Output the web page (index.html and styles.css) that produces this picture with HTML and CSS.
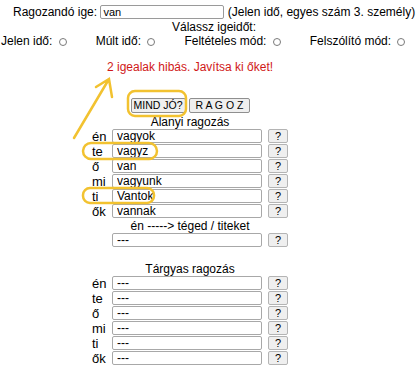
FILE: index.html
```html
<!DOCTYPE html>
<html lang="hu">
  <head>
    <meta charset="UTF-8" />
    <title>Igeragozás</title>
    <link rel="stylesheet" href="styles.css">
  </head>
  <body>
    <div class="page">
      <div class="verbLine">
        Ragozandó ige: <input type="text" class="verbInput" value="van" />
        (Jelen idő, egyes szám 3. személy)
      </div>
      <div class="choose">Válassz igeidőt:</div>
      <div class="tenses">
        <label>Jelen idő: <input type="radio" name="ido" /></label>
        <label>Múlt idő: <input type="radio" name="ido" /></label>
        <label>Feltételes mód: <input type="radio" name="ido" /></label>
        <label>Felszólító mód: <input type="radio" name="ido" /></label>
      </div>

      <div class="main">
        <div class="msg">2 igealak hibás. Javítsa ki őket!</div>
        <div class="buttons">
          <button class="bigBtn">MIND JÓ?</button><button class="bigBtn">R A G O Z</button>
        </div>

        <div class="title">Alanyi ragozás</div>
        <div class="conj">
          <span>én</span><input class="field" value="vagyok" /><button class="help">?</button>
          <span>te</span><input class="field" value="vagyz" /><button class="help">?</button>
          <span>ő</span><input class="field" value="van" /><button class="help">?</button>
          <span>mi</span><input class="field" value="vagyunk" /><button class="help">?</button>
          <span>ti</span><input class="field" value="Vantok" /><button class="help">?</button>
          <span>ők</span><input class="field" value="vannak" /><button class="help">?</button>
        </div>
        <div class="title">én -----&gt; téged / titeket</div>
        <div class="conj">
          <span></span><input class="field" value="---" /><button class="help">?</button>
        </div>

        <div class="title spaced">Tárgyas ragozás</div>
        <div class="conj">
          <span>én</span><input class="field" value="---" /><button class="help">?</button>
          <span>te</span><input class="field" value="---" /><button class="help">?</button>
          <span>ő</span><input class="field" value="---" /><button class="help">?</button>
          <span>mi</span><input class="field" value="---" /><button class="help">?</button>
          <span>ti</span><input class="field" value="---" /><button class="help">?</button>
          <span>ők</span><input class="field" value="---" /><button class="help">?</button>
        </div>
      </div>

      <!-- sárga jelölések a képernyőképen -->
      <svg class="marks" width="419" height="367" viewBox="0 0 419 367">
        <g fill="none" stroke="#f2c230" stroke-width="2.5" stroke-linecap="round">
          <rect x="128" y="91" width="58" height="25" rx="7" />
          <rect x="83" y="143" width="74" height="16" rx="8" />
          <rect x="83" y="188" width="71" height="15" rx="7" />
          <path d="M74 138 L109 79 M96 87 L109 79 L112 97" />
        </g>
      </svg>
    </div>
  </body>
</html>
```

FILE: styles.css
```css
* {
  font-family: "Liberation Sans", Arial, sans-serif;
}

body {
  margin: 0;
  font-size: 12px;
  color: #000;
  background: #fff;
}

.page {
  position: relative;
  width: 419px;
  height: 367px;
  overflow: hidden;
  padding-top: 5px;
  box-sizing: border-box;
}

.verbLine {
  height: 15px;
  line-height: 15px;
  padding-left: 13px;
  white-space: nowrap;
}

.verbInput {
  width: 124px;
  height: 14px;
  box-sizing: border-box;
  border: 1px solid #9a9a9a;
  border-radius: 2px;
  padding: 0 2px;
  font-size: 11px;
  vertical-align: top;
  margin: 0;
}

.choose {
  height: 14px;
  line-height: 14px;
  text-align: center;
  padding-left: 9px;
}

.tenses {
  display: flex;
  gap: 29px;
  padding-left: 1px;
  height: 15px;
  line-height: 15px;
  white-space: nowrap;
}

.tenses input {
  appearance: none;
  width: 8px;
  height: 8px;
  margin: 0 0 0 3px;
  border: 1px solid #7a7a7a;
  border-radius: 50%;
  background: #fff;
  vertical-align: -1px;
}

.main {
  width: 380px;
  text-align: center;
}

.msg {
  color: #d01818;
  margin-top: 11px;
  height: 14px;
  line-height: 14px;
}

.buttons {
  margin-top: 24px;
  margin-bottom: 3px;
  height: 14px;
  display: flex;
  justify-content: center;
  gap: 3px;
  padding-left: 1px;
}

.bigBtn {
  height: 15px;
  padding: 0 2px;
  margin: 0;
  font-size: 10.5px;
  line-height: 13px;
  background: #efefef;
  border: 1px solid #8f8f8f;
  border-radius: 2px;
  color: #000;
}

.bigBtn + .bigBtn {
  padding: 0 6px;
}

.title {
  height: 14px;
  line-height: 14px;
}

.title.spaced {
  margin-top: 14px;
}

.conj {
  display: grid;
  grid-template-columns: 20px 150px 26px;
  grid-auto-rows: 15px;
  width: 196px;
  margin: 0 auto;
  text-align: left;
  line-height: 15px;
}

.conj span {
  font-size: 13px;
}

.field {
  width: 150px;
  height: 14px;
  box-sizing: border-box;
  border: 1px solid #a8a8a8;
  border-radius: 2px;
  padding: 0 4px;
  margin: 0;
  font-size: 12px;
}

.help {
  justify-self: end;
  width: 20px;
  height: 14px;
  padding: 0;
  margin: 0;
  font-size: 11px;
  line-height: 12px;
  background: #efefef;
  border: 1px solid #b4b4b4;
  border-radius: 2px;
  color: #000;
}

.marks {
  position: absolute;
  top: 0;
  left: 0;
  pointer-events: none;
}
```
